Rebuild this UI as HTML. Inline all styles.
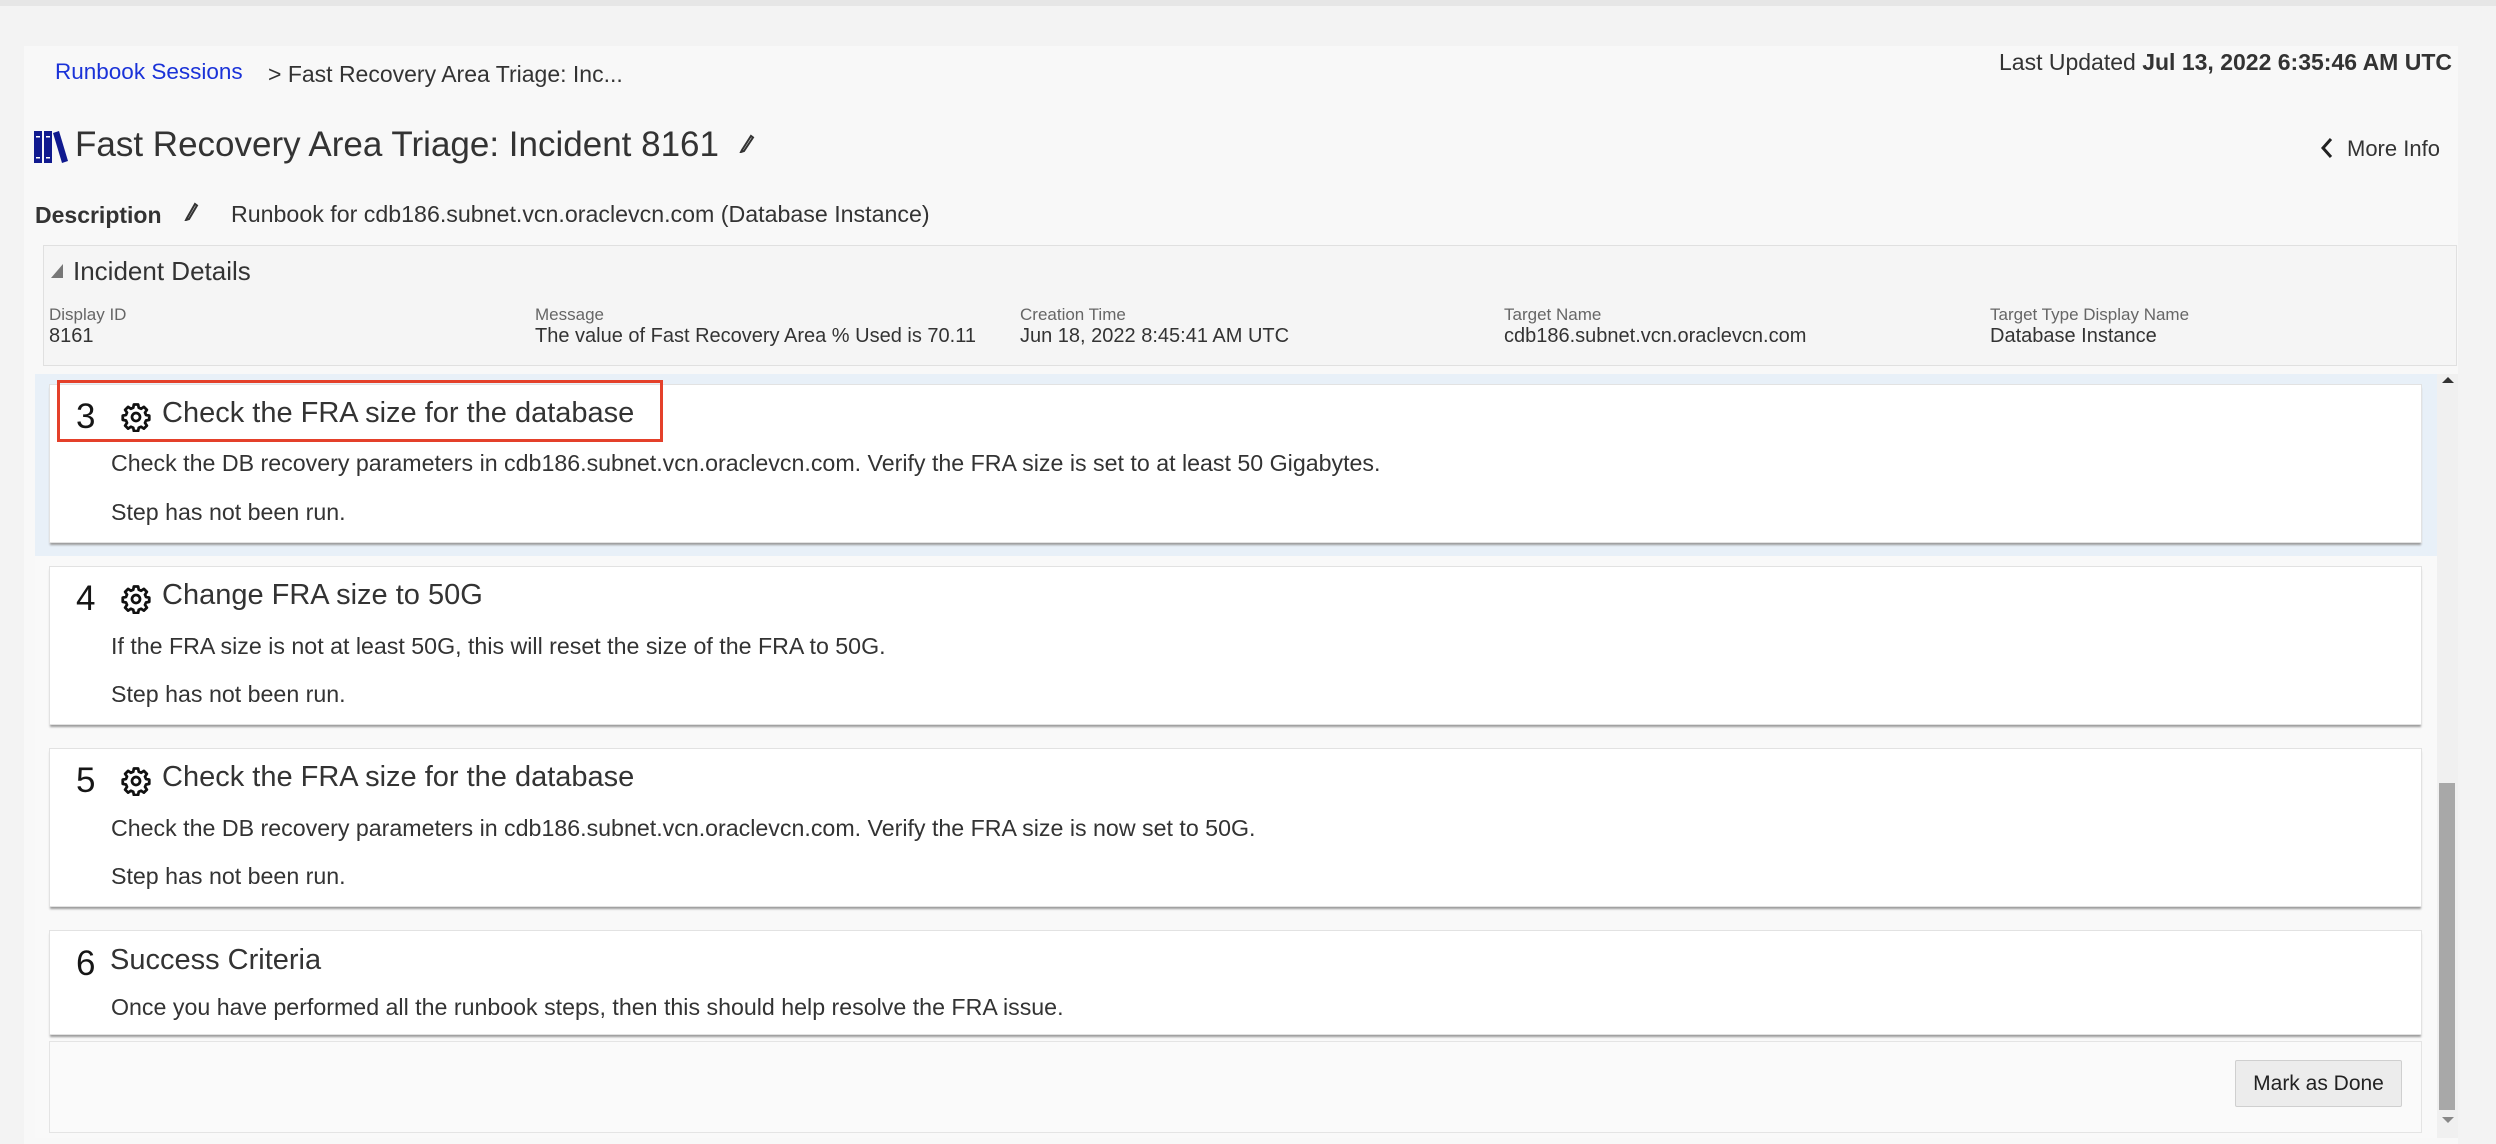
<!DOCTYPE html>
<html><head><meta charset="utf-8"><style>
*{margin:0;padding:0;box-sizing:border-box}
html,body{width:2496px;height:1144px;overflow:hidden;background:#f3f3f3;font-family:"Liberation Sans",sans-serif;color:#333}
.a{position:absolute;white-space:nowrap}
.card{position:absolute;left:49px;width:2373px;background:#fff;border:1px solid #e2e2e2;box-shadow:0 3px 2px -1px #9a9a9a}
.num{position:absolute;left:26px;font-size:35px;color:#161616}
.gear{position:absolute;left:71px;width:30px;height:30px}
.ttl{position:absolute;left:112px;font-size:29px;color:#333}
.txt{position:absolute;left:61px;font-size:23.2px;color:#333}
.lbl{font-size:17px;color:#666}
.val{font-size:20px;color:#333}
</style></head><body>
<div class="a" style="left:0;top:0;width:2496px;height:6px;background:#e6e6e6"></div>
<div class="a" style="left:24px;top:46px;width:2434px;height:1098px;background:#f8f8f8"></div>

<div class="a" style="left:55px;top:59px;font-size:22.5px;color:#1a32d8">Runbook Sessions</div>
<div class="a" style="left:268px;top:61px;font-size:23px;color:#333">&gt; Fast Recovery Area Triage: Inc...</div>
<div class="a" style="left:1999px;top:49px;font-size:23px;color:#333">Last Updated <b>Jul 13, 2022 6:35:46 AM UTC</b></div>

<svg class="a" style="left:33px;top:130px" width="36" height="34" viewBox="0 0 36 34">
<rect x="1" y="1" width="8" height="32" fill="#101a8f"/><rect x="11" y="1" width="8" height="32" fill="#101a8f"/>
<polygon points="20,3 26,1 35,31 29,33" fill="#101a8f"/>
<rect x="3" y="6" width="4" height="1.5" fill="#fff"/><rect x="3" y="27" width="4" height="1.5" fill="#fff"/>
<rect x="13" y="6" width="4" height="1.5" fill="#fff"/><rect x="13" y="27" width="4" height="1.5" fill="#fff"/>
</svg>
<div class="a" style="left:75px;top:125px;font-size:35px;color:#333">Fast Recovery Area Triage: Incident 8161</div>
<svg class="a" style="left:738px;top:133px" width="18" height="20" viewBox="0 0 18 20"><path d="M4 17 L13 3 L15 4.5 L6 18 L3 19 Z" fill="none" stroke="#333" stroke-width="2"/></svg>
<svg class="a" style="left:2320px;top:137px" width="14" height="22" viewBox="0 0 14 22"><path d="M11 2 L3 11 L11 20" fill="none" stroke="#222" stroke-width="3"/></svg>
<div class="a" style="left:2347px;top:136px;font-size:22px;color:#333">More Info</div>

<div class="a" style="left:35px;top:202px;font-size:23px;font-weight:bold;color:#333">Description</div>
<svg class="a" style="left:184px;top:201px" width="16" height="20" viewBox="0 0 16 20"><path d="M3 17 L11 3 L13 4.5 L5 18 L2 19 Z" fill="none" stroke="#333" stroke-width="2"/></svg>
<div class="a" style="left:231px;top:201px;font-size:23.2px;color:#333">Runbook for cdb186.subnet.vcn.oraclevcn.com (Database Instance)</div>

<div class="a" style="left:43px;top:245px;width:2414px;height:121px;background:#f5f5f5;border:1px solid #e0e0e0"></div>
<svg class="a" style="left:49px;top:262px" width="16" height="18"><polygon points="14,2 14,16 2,16" fill="#777"/></svg>
<div class="a" style="left:73px;top:256px;font-size:26px;color:#333">Incident Details</div>
<div class="a" style="left:49px;top:305px"><div class="lbl">Display ID</div><div class="val">8161</div></div>
<div class="a" style="left:535px;top:305px"><div class="lbl">Message</div><div class="val">The value of Fast Recovery Area % Used is 70.11</div></div>
<div class="a" style="left:1020px;top:305px"><div class="lbl">Creation Time</div><div class="val">Jun 18, 2022 8:45:41 AM UTC</div></div>
<div class="a" style="left:1504px;top:305px"><div class="lbl">Target Name</div><div class="val">cdb186.subnet.vcn.oraclevcn.com</div></div>
<div class="a" style="left:1990px;top:305px"><div class="lbl">Target Type Display Name</div><div class="val">Database Instance</div></div>

<div class="a" style="left:35px;top:374px;width:2402px;height:764px;background:#f9f9f9"></div>
<div class="a" style="left:35px;top:374px;width:2402px;height:182px;background:#e8f0f8"></div>
<div class="a" style="left:2437px;top:374px;width:21px;height:764px;background:#f0f0f0"></div>
<svg class="a" style="left:2440px;top:374px" width="16" height="12"><polygon points="8,3 14,9 2,9" fill="#333"/></svg>
<div class="a" style="left:2439px;top:783px;width:16px;height:327px;background:#a8a8a8"></div>
<svg class="a" style="left:2440px;top:1114px" width="16" height="12"><polygon points="2,3 14,3 8,9" fill="#888"/></svg>

<svg width="0" height="0" style="position:absolute"><defs><symbol id="g" viewBox="0 0 24 24"><path fill="none" stroke="#111" stroke-width="2.2" stroke-linejoin="round" d="M10.3 2h3.4l.5 2.6 1.9.8 2.2-1.5 2.4 2.4-1.5 2.2.8 1.9 2.6.5v3.4l-2.6.5-.8 1.9 1.5 2.2-2.4 2.4-2.2-1.5-1.9.8-.5 2.6h-3.4l-.5-2.6-1.9-.8-2.2 1.5-2.4-2.4 1.5-2.2-.8-1.9-2.6-.5v-3.4l2.6-.5.8-1.9-1.5-2.2 2.4-2.4 2.2 1.5 1.9-.8z"/><circle cx="12" cy="12" r="3.2" fill="none" stroke="#111" stroke-width="2.2"/></symbol></defs></svg>

<div class="card" style="top:384px;height:159px">
<div class="num" style="top:12px">3</div><svg class="gear" style="top:17px"><use href="#g"/></svg>
<div class="ttl" style="top:12px">Check the FRA size for the database</div>
<div class="txt" style="top:65px">Check the DB recovery parameters in cdb186.subnet.vcn.oraclevcn.com. Verify the FRA size is set to at least 50 Gigabytes.</div>
<div class="txt" style="top:114px">Step has not been run.</div>
</div>
<div class="a" style="left:57px;top:380px;width:606px;height:62px;border:3px solid #e4402a"></div>

<div class="card" style="top:566px;height:159px">
<div class="num" style="top:12px">4</div><svg class="gear" style="top:17px"><use href="#g"/></svg>
<div class="ttl" style="top:12px">Change FRA size to 50G</div>
<div class="txt" style="top:66px">If the FRA size is not at least 50G, this will reset the size of the FRA to 50G.</div>
<div class="txt" style="top:114px">Step has not been run.</div>
</div>

<div class="card" style="top:748px;height:159px">
<div class="num" style="top:12px">5</div><svg class="gear" style="top:17px"><use href="#g"/></svg>
<div class="ttl" style="top:12px">Check the FRA size for the database</div>
<div class="txt" style="top:66px">Check the DB recovery parameters in cdb186.subnet.vcn.oraclevcn.com. Verify the FRA size is now set to 50G.</div>
<div class="txt" style="top:114px">Step has not been run.</div>
</div>

<div class="card" style="top:930px;height:105px">
<div class="num" style="top:13px">6</div>
<div class="ttl" style="left:60px;top:13px">Success Criteria</div>
<div class="txt" style="top:63px">Once you have performed all the runbook steps, then this should help resolve the FRA issue.</div>
</div>

<div class="a" style="left:49px;top:1041px;width:2373px;height:92px;background:#fafafa;border:1px solid #e4e4e4"></div>
<div class="a" style="left:2235px;top:1060px;width:167px;height:47px;background:#ececec;border:1px solid #cfcfcf;border-radius:2px;font-size:21px;color:#222;text-align:center;line-height:45px">Mark as Done</div>
</body></html>
